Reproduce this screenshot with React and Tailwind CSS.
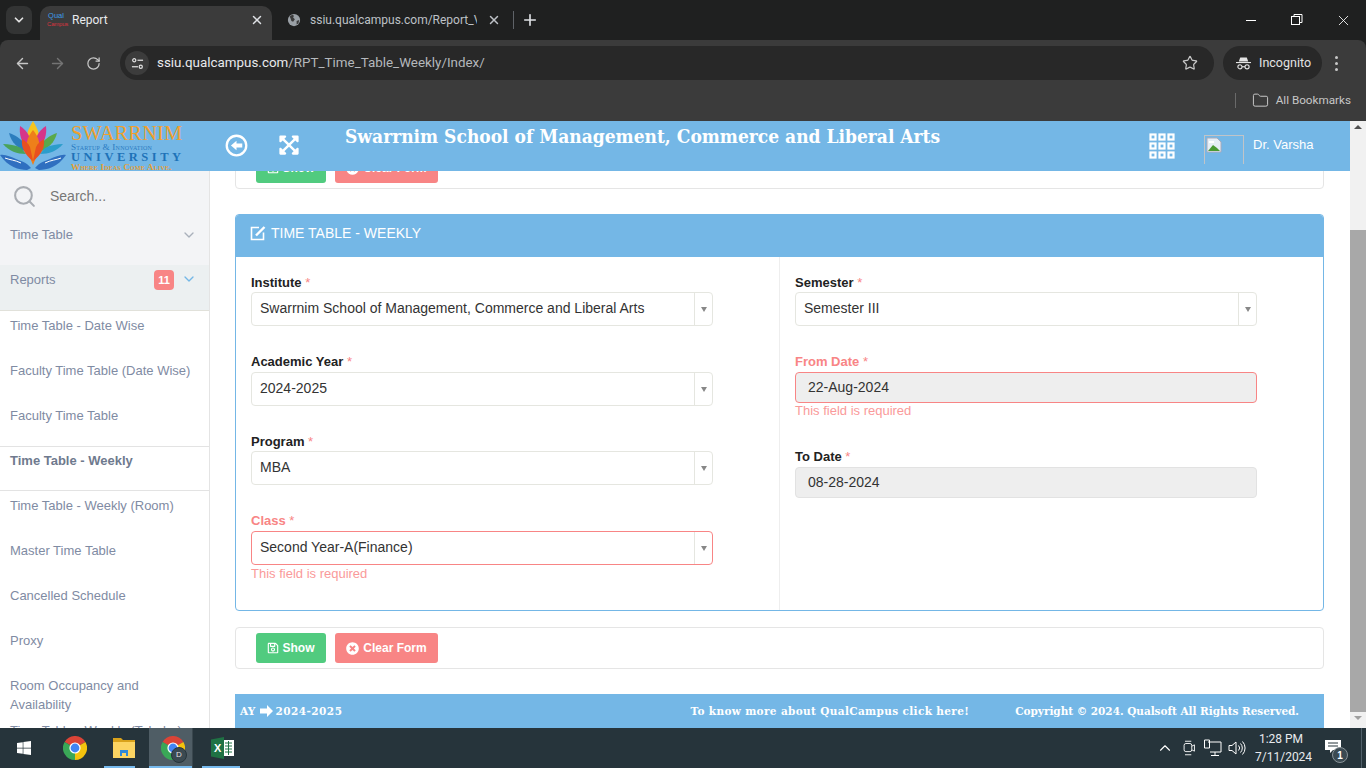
import React from "react";
import { ChevronDown, X, Plus, ArrowLeft, ArrowRight, RotateCw, Star, Folder, Search, ChevronUp } from "lucide-react";
import { FaExpandArrowsAlt, FaRegSave, FaTimesCircle, FaWindows } from "react-icons/fa";

const ChromeIcon = ({ className }) => (
  <svg viewBox="0 0 24 24" className={className}>
    <path d="M12 12L1.6 6A12 12 0 0 1 22.4 6Z" fill="#db4437" />
    <path d="M12 12L22.4 6A12 12 0 0 1 12 24Z" fill="#f4c20d" />
    <path d="M12 12L12 24A12 12 0 0 1 1.6 6Z" fill="#3aa757" />
    <circle cx="12" cy="12" r="5.6" fill="#fff" />
    <circle cx="12" cy="12" r="4.4" fill="#4285f4" />
  </svg>
);

const Logo = () => (
  <div className="flex w-[210px] h-full overflow-hidden shrink-0">
    <svg viewBox="0 0 66 50" className="w-[66px] h-[50px] shrink-0">
      <path d="M33 0C28 8 26 14 27 20L33 28L39 20C40 14 38 8 33 0Z" fill="#f6c51e" />
      <path d="M20 5C19 13 21 21 28 29L31 20C29 13 25 8 20 5Z" fill="#d6358a" />
      <path d="M46 5C47 13 45 21 38 29L35 20C37 13 41 8 46 5Z" fill="#d6358a" />
      <path d="M9 12C11 21 18 28 27 31L25 23C20 17 15 14 9 12Z" fill="#2c7dbd" />
      <path d="M57 12C55 21 48 28 39 31L41 23C46 17 51 14 57 12Z" fill="#5aa94a" />
      <path d="M3 23C9 30 17 33 26 33L21 27C15 24 9 23 3 23Z" fill="#4aa35a" />
      <path d="M63 23C57 30 49 33 40 33L45 27C51 24 57 23 63 23Z" fill="#2c9dcb" />
      <path d="M33 9C27 16 25 24 28 32L33 44L38 32C41 24 39 16 33 9Z" fill="#ee7f1a" />
      <path d="M22 18C21 27 25 34 33 40L30 26C28 22 25 20 22 18Z" fill="#e9501f" />
      <path d="M44 18C45 27 41 34 33 40L36 26C38 22 41 20 44 18Z" fill="#e9501f" />
      <path d="M0 34C5 33 11 36 16 38C21 40 26 41 31 47L27 49C19 49 8 46 0 34Z" fill="#2f6fc0" />
      <path d="M66 34C61 33 55 36 50 38C45 40 40 41 35 47L39 49C47 49 58 46 66 34Z" fill="#2f6fc0" />
      <path d="M5 37C10 39 15 39 21 42" stroke="#fff" strokeWidth="1" fill="none" />
      <path d="M61 37C56 39 51 39 45 42" stroke="#fff" strokeWidth="1" fill="none" />
    </svg>
    <div className="ml-[5px] mt-[3px] w-[112px] font-['Liberation_Serif',serif] leading-none whitespace-nowrap">
      <div className="text-[#efa02f] text-[20.5px] tracking-[0.1px] leading-[18px]">SWARRNIM</div>
      <div className="text-[#2b7bc2] text-[9.2px] tracking-[0.2px] leading-[9px] mt-px" style={{ fontVariant: "small-caps" }}>Startup & Innovation</div>
      <div className="text-[#1e72b8] text-[12.5px] tracking-[3.5px] leading-[11px] font-bold">UNIVERSITY</div>
      <div className="text-[#e6a035] text-[9px] font-bold tracking-[0.2px] leading-[9px]" style={{ fontVariant: "small-caps" }}>Where Ideas Come Alive.</div>
    </div>
  </div>
);

const BrowserChrome = () => (
  <div className="shrink-0 bg-[#1f2020] font-['Roboto','Liberation_Sans',sans-serif]">
    <div className="h-[40px] flex items-end relative">
      <div className="w-[26px] h-[28px] bg-[#333434] rounded-lg ml-[6px] mb-[6px] flex items-center justify-center">
        <ChevronDown size={14} strokeWidth={3} className="text-[#e3e3e3]" />
      </div>
      <div className="w-[232px] h-[34px] ml-[8px] bg-[#3b3b3b] rounded-t-[10px] flex items-center pl-[7px] pr-[8px] pb-[6px]">
        <div className="w-[18px] leading-[8px] text-[7.5px] text-center font-['Liberation_Sans_Narrow','Liberation_Sans',sans-serif] whitespace-nowrap">
          <div className="text-[#3d9be9]">Qual</div>
          <div className="text-[#d8343f] text-[6px] tracking-[-0.2px]">Campus</div>
        </div>
        <span className="ml-[7px] text-[12px] text-[#e8eaed]">Report</span>
        <X size={14} strokeWidth={2.5} className="ml-auto text-[#dfe1e5]" />
      </div>
      <div className="w-[235px] h-[34px] flex items-center pl-[15px] pb-[6px]">
        <svg viewBox="0 0 16 16" className="w-[14px] h-[14px] shrink-0">
          <circle cx="8" cy="8" r="7" fill="#9aa0a6" />
          <path d="M3 4l3-2 2 1-1 2 2 2-2 3-2-1-1-3zM11 9l3-1-1 4-2 1z" fill="#3b3b3b" />
        </svg>
        <span className="ml-[9px] text-[12px] text-[#bdc1c6] w-[167px] overflow-hidden whitespace-nowrap">ssiu.qualcampus.com/Report_Vi</span>
        <X size={14} strokeWidth={2.5} className="ml-[10px] text-[#bdc1c6]" />
      </div>
      <div className="w-px h-[18px] bg-[#5f6368] mb-[11px] ml-[6px]"></div>
      <Plus size={18} strokeWidth={2.2} className="ml-[7px] mb-[11px] text-[#dfe1e5]" />
      <div className="ml-auto h-full flex items-center text-[#e8eaed]">
        <div className="w-[46px] flex justify-center"><div className="w-[10px] h-px bg-white"></div></div>
        <div className="w-[46px] flex justify-center">
          <svg viewBox="0 0 12 12" className="w-[12px] h-[12px]" fill="none" stroke="#fff"><rect x="0.5" y="2.5" width="8" height="8" /><path d="M3 2.5V.5h8v8H8.5" /></svg>
        </div>
        <div className="w-[46px] flex justify-center"><X size={17} strokeWidth={1.2} className="text-white" /></div>
      </div>
    </div>
    <div className="h-[81px] bg-[#3b3b3b] rounded-t-[8px] flex flex-col">
      <div className="h-[46px] flex items-center">
        <ArrowLeft size={17} className="ml-[14px] text-[#c7c7c7]" />
        <ArrowRight size={17} className="ml-[18px] text-[#747474]" />
        <RotateCw size={15} className="ml-[20px] text-[#c7c7c7]" />
        <div className="ml-[19px] w-[1094px] h-[34px] rounded-full bg-[#282828] flex items-center pl-[5px] pr-[16px]">
          <div className="w-[24px] h-[24px] rounded-full bg-[#3c3c3c] flex items-center justify-center shrink-0">
            <svg viewBox="0 0 14 14" className="w-[13px] h-[13px]" fill="none" stroke="#e3e3e3" strokeWidth="1.3">
              <circle cx="3.5" cy="3.5" r="1.7" /><path d="M7 3.5h6" /><circle cx="10.5" cy="10.5" r="1.7" /><path d="M1 10.5h6.5" />
            </svg>
          </div>
          <span className="ml-[8px] text-[13.4px] text-[#e8eaed]">ssiu.qualcampus.com<span className="text-[#b5b8bc]">/RPT_Time_Table_Weekly/Index/</span></span>
          <Star size={16} strokeWidth={1.8} className="ml-auto text-[#c7c7c7]" />
        </div>
        <div className="ml-[9px] w-[99px] h-[34px] rounded-full bg-[#282828] flex items-center pl-[13px]">
          <svg viewBox="0 0 16 14" className="w-[15px] h-[14px] shrink-0" fill="none" stroke="#e3e3e3" strokeWidth="1.2">
            <path d="M0 6.5h16" /><path d="M3 5.5L4.5 1h7L13 5.5" fill="#e3e3e3" stroke="none" /><circle cx="4.2" cy="11" r="2.2" /><circle cx="11.8" cy="11" r="2.2" /><path d="M6.4 11h3.2" />
          </svg>
          <span className="ml-[8px] text-[12.5px] text-[#e3e3e3]">Incognito</span>
        </div>
        <div className="ml-[13px] flex flex-col gap-[3px]">
          <div className="w-[3px] h-[3px] rounded-full bg-[#c7c7c7]"></div>
          <div className="w-[3px] h-[3px] rounded-full bg-[#c7c7c7]"></div>
          <div className="w-[3px] h-[3px] rounded-full bg-[#c7c7c7]"></div>
        </div>
      </div>
      <div className="flex-1 flex items-start justify-end pr-[15px] pt-[6px]">
        <div className="w-px h-[15px] bg-[#6a6a6a] mt-[1px]"></div>
        <Folder size={17} strokeWidth={1.4} className="ml-[16px] text-[#c7c7c7]" />
        <span className="ml-[7px] text-[11.7px] leading-[17px] text-[#c7c7c7]">All Bookmarks</span>
      </div>
    </div>
  </div>
);

const GridIcon = () => (
  <svg viewBox="0 0 26 26" className="w-[26px] h-[26px]" fill="none" stroke="#fff" strokeWidth="2.2">
    {[1.5, 10.5, 19.5].flatMap((y) => [1.5, 10.5, 19.5].map((x) => <rect key={`${x}-${y}`} x={x} y={y} width="5" height="5" />))}
  </svg>
);

const AppHeader = () => (
  <div className="h-[50px] bg-[#74b7e6] flex shrink-0 relative z-10">
    <Logo />
    <svg viewBox="0 0 24 24" className="w-[23px] h-[23px] ml-[15px] mt-[13px] shrink-0">
      <circle cx="12" cy="12" r="10.2" fill="none" stroke="#fff" strokeWidth="2.4" />
      <path d="M6.2 12L12 7v3h6v4h-6v3z" fill="#fff" />
    </svg>
    <FaExpandArrowsAlt className="ml-[30px] mt-[13px] w-[22px] h-[22px] text-white shrink-0" />
    <div className="ml-[45px] mt-[2px] text-[19px] leading-[26px] font-bold text-white font-['DejaVu_Serif_Condensed','DejaVu_Serif',serif] whitespace-nowrap w-[770px]">
      Swarrnim School of Management, Commerce and Liberal Arts
    </div>
    <div className="absolute left-[1149px] top-[12px]"><GridIcon /></div>
    <div className="absolute left-[1204px] top-[14px] w-[40px] h-[29px] border-l border-r border-t border-[#c0c4c8]">
      <svg viewBox="0 0 16 16" className="w-[16px] h-[16px] ml-px mt-px">
        <path d="M1 1h10l4 4v10H1z" fill="#e6eef5" stroke="#aab" strokeWidth="1" />
        <path d="M2 14l5-6 4 3 3 3z" fill="#4a9a32" />
        <path d="M3 4h5v2H3z" fill="#fff" />
      </svg>
    </div>
    <span className="absolute left-[1253px] top-[14px] text-[13px] leading-[20px] text-white font-['Liberation_Sans',sans-serif]">Dr. Varsha</span>
  </div>
);

const Item = ({ children, active }) => (
  <div className={`h-[45px] shrink-0 pl-[10px] pr-[10px] text-[13px] leading-[19px] ${active ? "pt-[4px] font-bold text-[#6f7a8e] border-t border-b border-[#e3e3e3] bg-white" : "pt-[5px] text-[#7f8ba3]"}`}>
    {children}
  </div>
);

const Sidebar = () => (
  <div className="w-[210px] shrink-0 border-r border-[#e4e4e4] bg-white flex flex-col overflow-hidden font-['Liberation_Sans',sans-serif]">
    <div className="bg-[#f3f4f6] h-[94px] shrink-0">
      <div className="h-[50px] flex items-center pl-[12px]">
        <Search size={25} strokeWidth={2} className="text-[#a8acb2]" />
        <span className="ml-[13px] text-[14px] text-[#777]">Search...</span>
      </div>
      <div className="h-[24px] pt-[4px] flex items-center justify-between pl-[10px] pr-[12px] text-[13px] text-[#7f8ba3]">
        <span>Time Table</span>
        <ChevronDown size={16} strokeWidth={2} className="text-[#a9b0bb]" />
      </div>
    </div>
    <div className="h-[46px] shrink-0 bg-[#ecf0f1] border-b border-[#e1e1da] flex items-start pl-[10px] pr-[12px] pt-[5px] text-[13px] leading-[19px] text-[#7f8ba3]">
      <span>Reports</span>
      <span className="ml-auto w-[20px] h-[20px] rounded-[4px] bg-[#f88585] text-white text-[11px] font-bold flex items-center justify-center mr-[7px]">11</span>
      <ChevronDown size={16} strokeWidth={2} className="text-[#74b7e6] mt-[1px]" />
    </div>
    <div className="flex flex-col">
      <Item>Time Table - Date Wise</Item>
      <Item>Faculty Time Table (Date Wise)</Item>
      <Item>Faculty Time Table</Item>
      <Item active>Time Table - Weekly</Item>
      <Item>Time Table - Weekly (Room)</Item>
      <Item>Master Time Table</Item>
      <Item>Cancelled Schedule</Item>
      <Item>Proxy</Item>
      <Item>Room Occupancy and Availability</Item>
      <Item>Time Table - Weekly (Tabular)</Item>
    </div>
  </div>
);

const Req = () => <span className="text-[#f88585] font-normal"> *</span>;

const Label = ({ label, err }) => (
  <div className={`h-[20px] text-[13px] leading-[22px] font-bold ${err ? "text-[#f88585]" : "text-[#222]"}`}>
    {label}<Req />
  </div>
);

const ErrorText = ({ children, className }) => <div className={`text-[13px] leading-[16px] text-[#fa9a9a] ${className}`}>{children}</div>;

const SelectField = ({ label, value, err, error, mt, gap }) => (
  <div className={mt}>
    <Label label={label} err={err} />
    <div className={`h-[34px] ${gap} rounded-[4px] border ${err ? "border-[#f88585]" : "border-[#e5e6e0]"} bg-white flex items-center`}>
      <span className="flex-1 pl-[8px] pb-[2px] text-[14px] text-[#333]">{value}</span>
      <div className="w-[18px] h-full border-l border-[#e5e6e0] flex items-center justify-center">
        <div className="w-0 h-0 border-l-[3px] border-r-[3px] border-t-[5px] border-l-transparent border-r-transparent border-t-[#888]"></div>
      </div>
    </div>
    {error && <ErrorText className="mt-px">{error}</ErrorText>}
  </div>
);

const DateField = ({ label, value, err, error, mt }) => (
  <div className={mt}>
    <Label label={label} err={err} />
    <div className={`h-[31px] mt-px rounded-[4px] border ${err ? "border-[#f88585]" : "border-[#e2e2e2]"} bg-[#eeeeee] flex items-center pl-[12px] text-[14px] text-[#333]`}>
      {value}
    </div>
    {error && <ErrorText>{error}</ErrorText>}
  </div>
);

const Buttons = ({ className }) => (
  <div className={`h-[42px] border border-[#e5e5e5] rounded-[4px] bg-white flex items-center pl-[20px] gap-[9px] shrink-0 ${className}`}>
    <button className="w-[70px] h-[30px] rounded-[3px] bg-[#51cb7f] text-white text-[12px] font-bold flex items-center justify-center gap-[4px] pr-px">
      <FaRegSave size={12} /> Show
    </button>
    <button className="w-[103px] h-[30px] rounded-[3px] bg-[#f88585] text-white text-[12px] font-bold flex items-center justify-center gap-[4px]">
      <FaTimesCircle size={13} /> Clear Form
    </button>
  </div>
);

const Main = () => (
  <div className="flex-1 min-w-0 pl-[25px] pr-[26px] overflow-hidden flex flex-col font-['Liberation_Sans',sans-serif] bg-white">
    <Buttons className="-mt-[24px]" />
    <div className="mt-[25px] h-[397px] shrink-0 border border-[#74b7e6] rounded-[4px] flex flex-col overflow-hidden">
      <div className="h-[43px] shrink-0 -mx-px -mt-px bg-[#74b7e6] flex items-center pl-[15px] pb-[5px] text-white text-[14px]">
        <svg viewBox="0 0 16 16" className="w-[16px] h-[16px]" fill="none" stroke="#fff">
          <path d="M9 2.5H1.5v12h12V7.5" strokeWidth="1.6" />
          <path d="M6 10.5L14.5 2" strokeWidth="2.4" />
        </svg>
        <span className="ml-[5px]">TIME TABLE - WEEKLY</span>
      </div>
      <div className="flex-1 flex">
        <div className="w-[544px] border-r border-[#eeeeee] pl-[15px] pr-[66px] pt-[15px]">
          <SelectField label="Institute" value="Swarrnim School of Management, Commerce and Liberal Arts" />
          <SelectField mt="mt-[25px]" gap="mt-px" label="Academic Year" value="2024-2025" />
          <SelectField mt="mt-[25px]" label="Program" value="MBA" />
          <SelectField mt="mt-[25px]" gap="mt-px" label="Class" value="Second Year-A(Finance)" err error="This field is required" />
        </div>
        <div className="flex-1 pl-[15px] pr-[66px] pt-[15px]">
          <SelectField label="Semester" value="Semester III" />
          <DateField mt="mt-[25px]" label="From Date" value="22-Aug-2024" err error="This field is required" />
          <DateField mt="mt-[27px]" label="To Date" value="08-28-2024" />
        </div>
      </div>
    </div>
    <Buttons className="mt-[16px]" />
    <div className="mt-[25px] h-[60px] shrink-0 bg-[#74b7e6] text-white font-bold font-['DejaVu_Serif',serif] text-[10.5px] leading-[34px]">
      <div className="flex items-center h-[34px] pl-[5px] pr-[25px] whitespace-nowrap">
        <span className="tracking-[0.2px]">AY</span>
        <svg viewBox="0 0 13 12" className="w-[13px] h-[12px] ml-[4px] mr-[3px]" fill="#fff"><path d="M0 3.5h7V0l6 6-6 6V8.5H0z" /></svg>
        <span className="tracking-[0.45px]">2024-2025</span>
        <span className="ml-auto tracking-[0.35px]">To know more about QualCampus click here!</span>
        <span className="ml-[46px] tracking-[-0.03px]">Copyright © 2024. Qualsoft All Rights Reserved.</span>
      </div>
    </div>
  </div>
);

const Scrollbar = () => (
  <div className="w-[16px] shrink-0 bg-[#f1f1f1] flex flex-col items-center relative">
    <div className="mt-[4px] w-0 h-0 border-l-[4px] border-r-[4px] border-b-[4px] border-l-transparent border-r-transparent border-b-[#505050]"></div>
    <div className="mt-[101px] w-full h-[482px] bg-[#a8a8a8]"></div>
    <div className="mt-[4px] w-0 h-0 border-l-[4px] border-r-[4px] border-t-[4px] border-l-transparent border-r-transparent border-t-[#a0a0a0]"></div>
  </div>
);

const Taskbar = () => (
  <div className="h-[40px] shrink-0 bg-[#26343b] flex relative font-['Liberation_Sans',sans-serif] text-white">
    <FaWindows className="absolute left-[16px] top-[12px] w-[16px] h-[16px] text-white" />
    <ChromeIcon className="absolute left-[63px] top-[8px] w-[24px] h-[24px]" />
    <svg viewBox="0 0 24 20" className="absolute left-[112px] top-[10px] w-[24px] h-[20px]">
      <path d="M1 0h8l2 2h12v4H1z" fill="#d9a21b" />
      <path d="M1 4h22v16H1z" fill="#fcd462" />
      <path d="M8 18v-6h8v6h-2v-3h-4v3z" fill="#2f88d8" />
    </svg>
    <div className="absolute left-[104px] bottom-0 w-[31px] h-[2px] bg-[#76b9ed]"></div>
    <div className="absolute left-[149px] top-0 w-[44px] h-[40px] bg-[#4f5d65] border-r border-[#3a474e]">
      <ChromeIcon className="absolute left-[12px] top-[8px] w-[24px] h-[24px]" />
      <div className="absolute left-[22px] top-[19px] w-[16px] h-[16px] rounded-full bg-[#3b4a52] border border-[#26343b] text-[8px] flex items-center justify-center text-[#e0e0e0]">D</div>
      <div className="absolute left-0 bottom-0 w-full h-[2px] bg-[#76b9ed]"></div>
    </div>
    <svg viewBox="0 0 24 22" className="absolute left-[211px] top-[9px] w-[24px] h-[22px]">
      <path d="M12 3h11v16H12z" fill="#fff" />
      <path d="M14 6h7M14 9h7M14 12h7M14 15h7M17.5 4v14" stroke="#1f7244" strokeWidth="1" />
      <path d="M0 2.5L13 0v22L0 19.5z" fill="#1f7244" />
    </svg>
    <span className="absolute left-[214px] top-[12px] text-[11px] font-bold leading-[16px] text-white">X</span>
    <div className="absolute left-[202px] bottom-0 w-[38px] h-[2px] bg-[#76b9ed]"></div>
    <ChevronUp size={18} strokeWidth={1.5} className="absolute left-[1156px] top-[11px] text-white" />
    <svg viewBox="0 0 14 20" className="absolute left-[1183px] top-[11px] w-[13px] h-[18px]" fill="none" stroke="#fff" strokeWidth="1">
      <rect x="1" y="5" width="8.5" height="9" rx="2" /><path d="M9.5 8l3-1.5v7l-3-1.5" /><path d="M2 2.5h7M2 17.5h7" />
    </svg>
    <svg viewBox="0 0 18 18" className="absolute left-[1204px] top-[11px] w-[18px] h-[18px]" fill="none" stroke="#fff" strokeWidth="1">
      <path d="M4 3h13v10H6" /><path d="M0.5 1h5v8h-5z" /><path d="M11 13v3M7 16.5h8" />
    </svg>
    <svg viewBox="0 0 18 16" className="absolute left-[1228px] top-[12px] w-[18px] h-[16px]" fill="none" stroke="#fff" strokeWidth="1">
      <path d="M1 5.5h3L8 2v12l-4-3.5H1z" /><path d="M10.5 5.5a3.5 3.5 0 0 1 0 5M12.5 3.5a6.5 6.5 0 0 1 0 9M14.5 1.5a9.5 9.5 0 0 1 0 13" />
    </svg>
    <div className="absolute left-[1255px] top-[3px] w-[52px] text-center text-[12px] leading-[17.5px] text-[#e8eaed] font-['Roboto','Liberation_Sans',sans-serif]">
      <div>1:28 PM</div>
      <div>7/11/2024</div>
    </div>
    <svg viewBox="0 0 16 14" className="absolute left-[1325px] top-[12px] w-[16px] h-[14px]" fill="#fff">
      <path d="M0 0h16v10H8l-3 3v-3H0z" />
      <path d="M3 3h10M3 6h10" stroke="#26343b" strokeWidth="1" />
    </svg>
    <div className="absolute left-[1332px] top-[19px] w-[16px] h-[16px] rounded-full bg-[#3b4a52] border border-[#8a9499] text-[10px] font-bold flex items-center justify-center">1</div>
    <div className="absolute left-[1361px] top-0 w-px h-full bg-[#51606a]"></div>
  </div>
);

export default function App() {
  return (
    <div className="w-[1366px] h-[768px] overflow-hidden flex flex-col bg-white">
      <BrowserChrome />
      <div className="flex-1 min-h-0 flex">
        <div className="flex-1 min-w-0 flex flex-col">
          <AppHeader />
          <div className="flex-1 min-h-0 flex">
            <Sidebar />
            <Main />
          </div>
        </div>
        <Scrollbar />
      </div>
      <Taskbar />
    </div>
  );
}
